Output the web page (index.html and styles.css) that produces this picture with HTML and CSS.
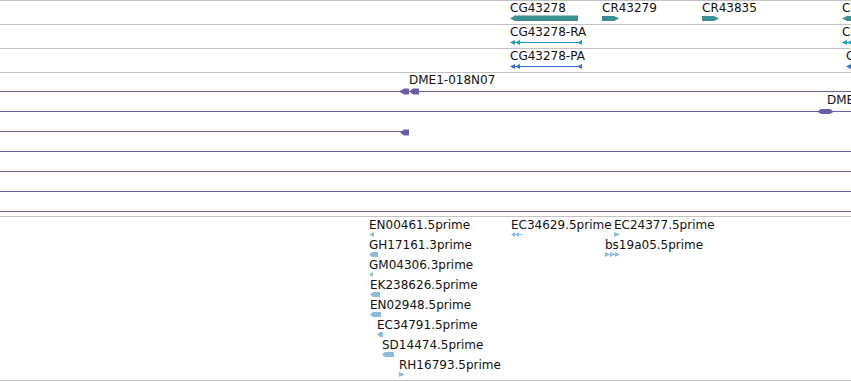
FILE: index.html
```html
<!DOCTYPE html>
<html lang="en">
<head>
    <meta charset="UTF-8">
    <title>Track view</title>
    <link rel="stylesheet" href="styles.css">
</head>
<body>

<div class="view">

    <!-- gene track -->
    <div class="track row">
        <div class="feat" style="left:510px">
            <span class="label">CG43278</span>
            <svg class="glyph gene" width="68" height="7"><polygon points="0,3.5 5,0.5 68,0.5 68,6 5,6"/></svg>
        </div>
        <div class="feat" style="left:602px">
            <span class="label">CR43279</span>
            <svg class="glyph gene" width="17" height="7"><polygon points="0,1 12,1 17,3.5 12,6 0,6"/></svg>
        </div>
        <div class="feat" style="left:702px">
            <span class="label">CR43835</span>
            <svg class="glyph gene" width="17" height="7"><polygon points="0,1 12,1 17,3.5 12,6 0,6"/></svg>
        </div>
        <div class="feat" style="left:842px">
            <span class="label">CG43277</span>
            <svg class="glyph gene" width="40" height="7"><polygon points="0,3.5 5,1 40,1 40,6 5,6"/></svg>
        </div>
    </div>

    <!-- transcripts -->
    <div class="track row">
        <div class="feat" style="left:510px">
            <span class="label">CG43278-RA</span>
            <svg class="glyph mrna" width="73" height="7">
                <line x1="5" y1="3.5" x2="72" y2="3.5"/>
                <polygon points="0,3.5 5,1 5,6"/>
                <polygon points="5,3.5 10,1 10,6"/>
                <polygon points="67,3.5 72,1 72,6"/>
            </svg>
        </div>
        <div class="feat" style="left:842px">
            <span class="label">CG43277-RA</span>
            <svg class="glyph mrna" width="40" height="7">
                <line x1="5" y1="3.5" x2="40" y2="3.5"/>
                <polygon points="0,3.5 5,1 5,6"/>
                <polygon points="5,3.5 10,1 10,6"/>
            </svg>
        </div>
    </div>

    <div class="track row">
        <div class="feat" style="left:510px">
            <span class="label">CG43278-PA</span>
            <svg class="glyph prot" width="73" height="7">
                <line x1="5" y1="3.5" x2="72" y2="3.5"/>
                <polygon points="0,3.5 5,1 5,6"/>
                <polygon points="5,3.5 10,1 10,6"/>
                <polygon points="67,3.5 72,1 72,6"/>
            </svg>
        </div>
        <div class="feat" style="left:846px">
            <span class="label">CG43277-PA</span>
            <svg class="glyph prot" width="40" height="7">
                <line x1="5" y1="3.5" x2="40" y2="3.5"/>
                <polygon points="0,3.5 5,1 5,6"/>
            </svg>
        </div>
    </div>

    <!-- BAC clones -->
    <div class="track clones">
        <div class="lane">
            <div class="lane-line" style="left:0;right:0"></div>
            <div class="feat" style="left:399px">
                <span class="label pad">DME1-018N07</span>
                <svg class="glyph clone" width="20" height="7">
                    <polygon points="0,3.5 5,0.5 10,0.5 10,6.5 5,6.5"/>
                    <polygon points="10,3.5 14,0.5 20,0.5 20,6.5 14,6.5"/>
                </svg>
            </div>
        </div>
        <div class="lane">
            <div class="lane-line" style="left:0;right:0"></div>
            <div class="feat" style="left:817px">
                <span class="label pad">DME1-023K14</span>
                <svg class="glyph clone" width="17" height="7"><polygon points="0,3.5 4,1 13,1 17,3.5 13,6 4,6"/></svg>
            </div>
        </div>
        <div class="lane">
            <div class="lane-line" style="left:0;width:402px"></div>
            <div class="feat nolabel" style="left:400px">
                <svg class="glyph clone" width="9" height="7"><polygon points="0,3.5 4,0.5 9,0.5 9,6.5 4,6.5"/></svg>
            </div>
        </div>
        <div class="lane"><div class="lane-line" style="left:0;right:0"></div></div>
        <div class="lane"><div class="lane-line" style="left:0;right:0"></div></div>
        <div class="lane"><div class="lane-line" style="left:0;right:0"></div></div>
        <div class="lane"><div class="lane-line" style="left:0;right:0"></div></div>
    </div>

    <!-- EST alignments -->
    <div class="track ests">
        <div class="feat" style="left:369px;top:1px">
            <span class="label">EN00461.5prime</span>
            <svg class="glyph est" width="5" height="5"><polygon points="0,2.5 5,0 5,5"/></svg>
        </div>
        <div class="feat" style="left:369px;top:21px">
            <span class="label">GH17161.3prime</span>
            <svg class="glyph est" width="9" height="5"><polygon points="0,2.5 3,0 9,0 9,5 3,5"/></svg>
        </div>
        <div class="feat" style="left:369px;top:41px">
            <span class="label">GM04306.3prime</span>
            <svg class="glyph est" width="4" height="5"><polygon points="0,2.5 4,0 4,5"/></svg>
        </div>
        <div class="feat" style="left:370px;top:61px">
            <span class="label">EK238626.5prime</span>
            <svg class="glyph est" width="10" height="5"><polygon points="0,2.5 3,0 10,0 10,5 3,5"/></svg>
        </div>
        <div class="feat" style="left:370px;top:81px">
            <span class="label">EN02948.5prime</span>
            <svg class="glyph est" width="11" height="5"><polygon points="0,2.5 3,0 11,0 11,5 3,5"/></svg>
        </div>
        <div class="feat" style="left:377px;top:101px">
            <span class="label">EC34791.5prime</span>
            <svg class="glyph est" width="6" height="5"><polygon points="0,2.5 3,0 6,0 6,5 3,5"/></svg>
        </div>
        <div class="feat" style="left:382px;top:121px">
            <span class="label">SD14474.5prime</span>
            <svg class="glyph est" width="12" height="5"><polygon points="0,2.5 3,0 12,0 12,5 3,5"/></svg>
        </div>
        <div class="feat" style="left:399px;top:141px">
            <span class="label">RH16793.5prime</span>
            <svg class="glyph est" width="6" height="5"><polygon points="0,0 6,2.5 0,5"/></svg>
        </div>
        <div class="feat" style="left:511px;top:1px">
            <span class="label">EC34629.5prime</span>
            <svg class="glyph est" width="11" height="5">
                <line x1="4" y1="2.5" x2="11" y2="2.5"/>
                <polygon points="0,2.5 4,0 4,5"/>
                <polygon points="4,2.5 8,0 8,5"/>
            </svg>
        </div>
        <div class="feat" style="left:614px;top:1px">
            <span class="label">EC24377.5prime</span>
            <svg class="glyph est" width="6" height="5"><polygon points="0,0 6,2.5 0,5"/></svg>
        </div>
        <div class="feat" style="left:605px;top:21px">
            <span class="label">bs19a05.5prime</span>
            <svg class="glyph est" width="15" height="5">
                <line x1="0" y1="2.5" x2="11" y2="2.5"/>
                <polygon points="0,0 5,2.5 0,5"/>
                <polygon points="5,0 10,2.5 5,5"/>
                <polygon points="10,0 15,2.5 10,5"/>
            </svg>
        </div>
    </div>

</div>

</body>
</html>
```

FILE: styles.css
```css
body {
    margin: 0;
    background-color: white;
    font-family: "DejaVu Sans", sans-serif;
}
.view {
    width: 851px;
    height: 381px;
    overflow: hidden;
}
.track {
    position: relative;
    box-sizing: border-box;
    border-top: 1px solid #c3c3c3;
}
.row {
    height: 24px;
}
.clones {
    height: 144px;
    padding-bottom: 3px;
}
.ests {
    height: 165px;
    border-bottom: 1px solid #c3c3c3;
}
.lane {
    position: relative;
    height: 20px;
}
.lane-line {
    position: absolute;
    top: 18px;
    height: 1px;
    background-color: #6c5ca6;
}
.feat {
    position: absolute;
    top: 0;
    display: flex;
    flex-direction: column;
    align-items: flex-start;
    white-space: nowrap;
}
.feat.nolabel {
    top: 15px;
}
.label {
    font-size: 12px;
    line-height: 14px;
    color: #111;
}
.label.pad {
    margin-left: 10px;
}
.glyph {
    display: block;
    overflow: visible;
}
.clone {
    margin-top: 1px;
}
.gene polygon {
    fill: #3c8f90;
}
.mrna polygon {
    fill: #1b9dbf;
}
.mrna line {
    stroke: #1b9dbf;
    stroke-width: 1;
}
.prot polygon {
    fill: #376fd0;
}
.prot line {
    stroke: #376fd0;
    stroke-width: 1;
}
.clone polygon {
    fill: #6c5ca6;
}
.est polygon {
    fill: #8abbe0;
}
.est line {
    stroke: #8abbe0;
    stroke-width: 1;
}
```
